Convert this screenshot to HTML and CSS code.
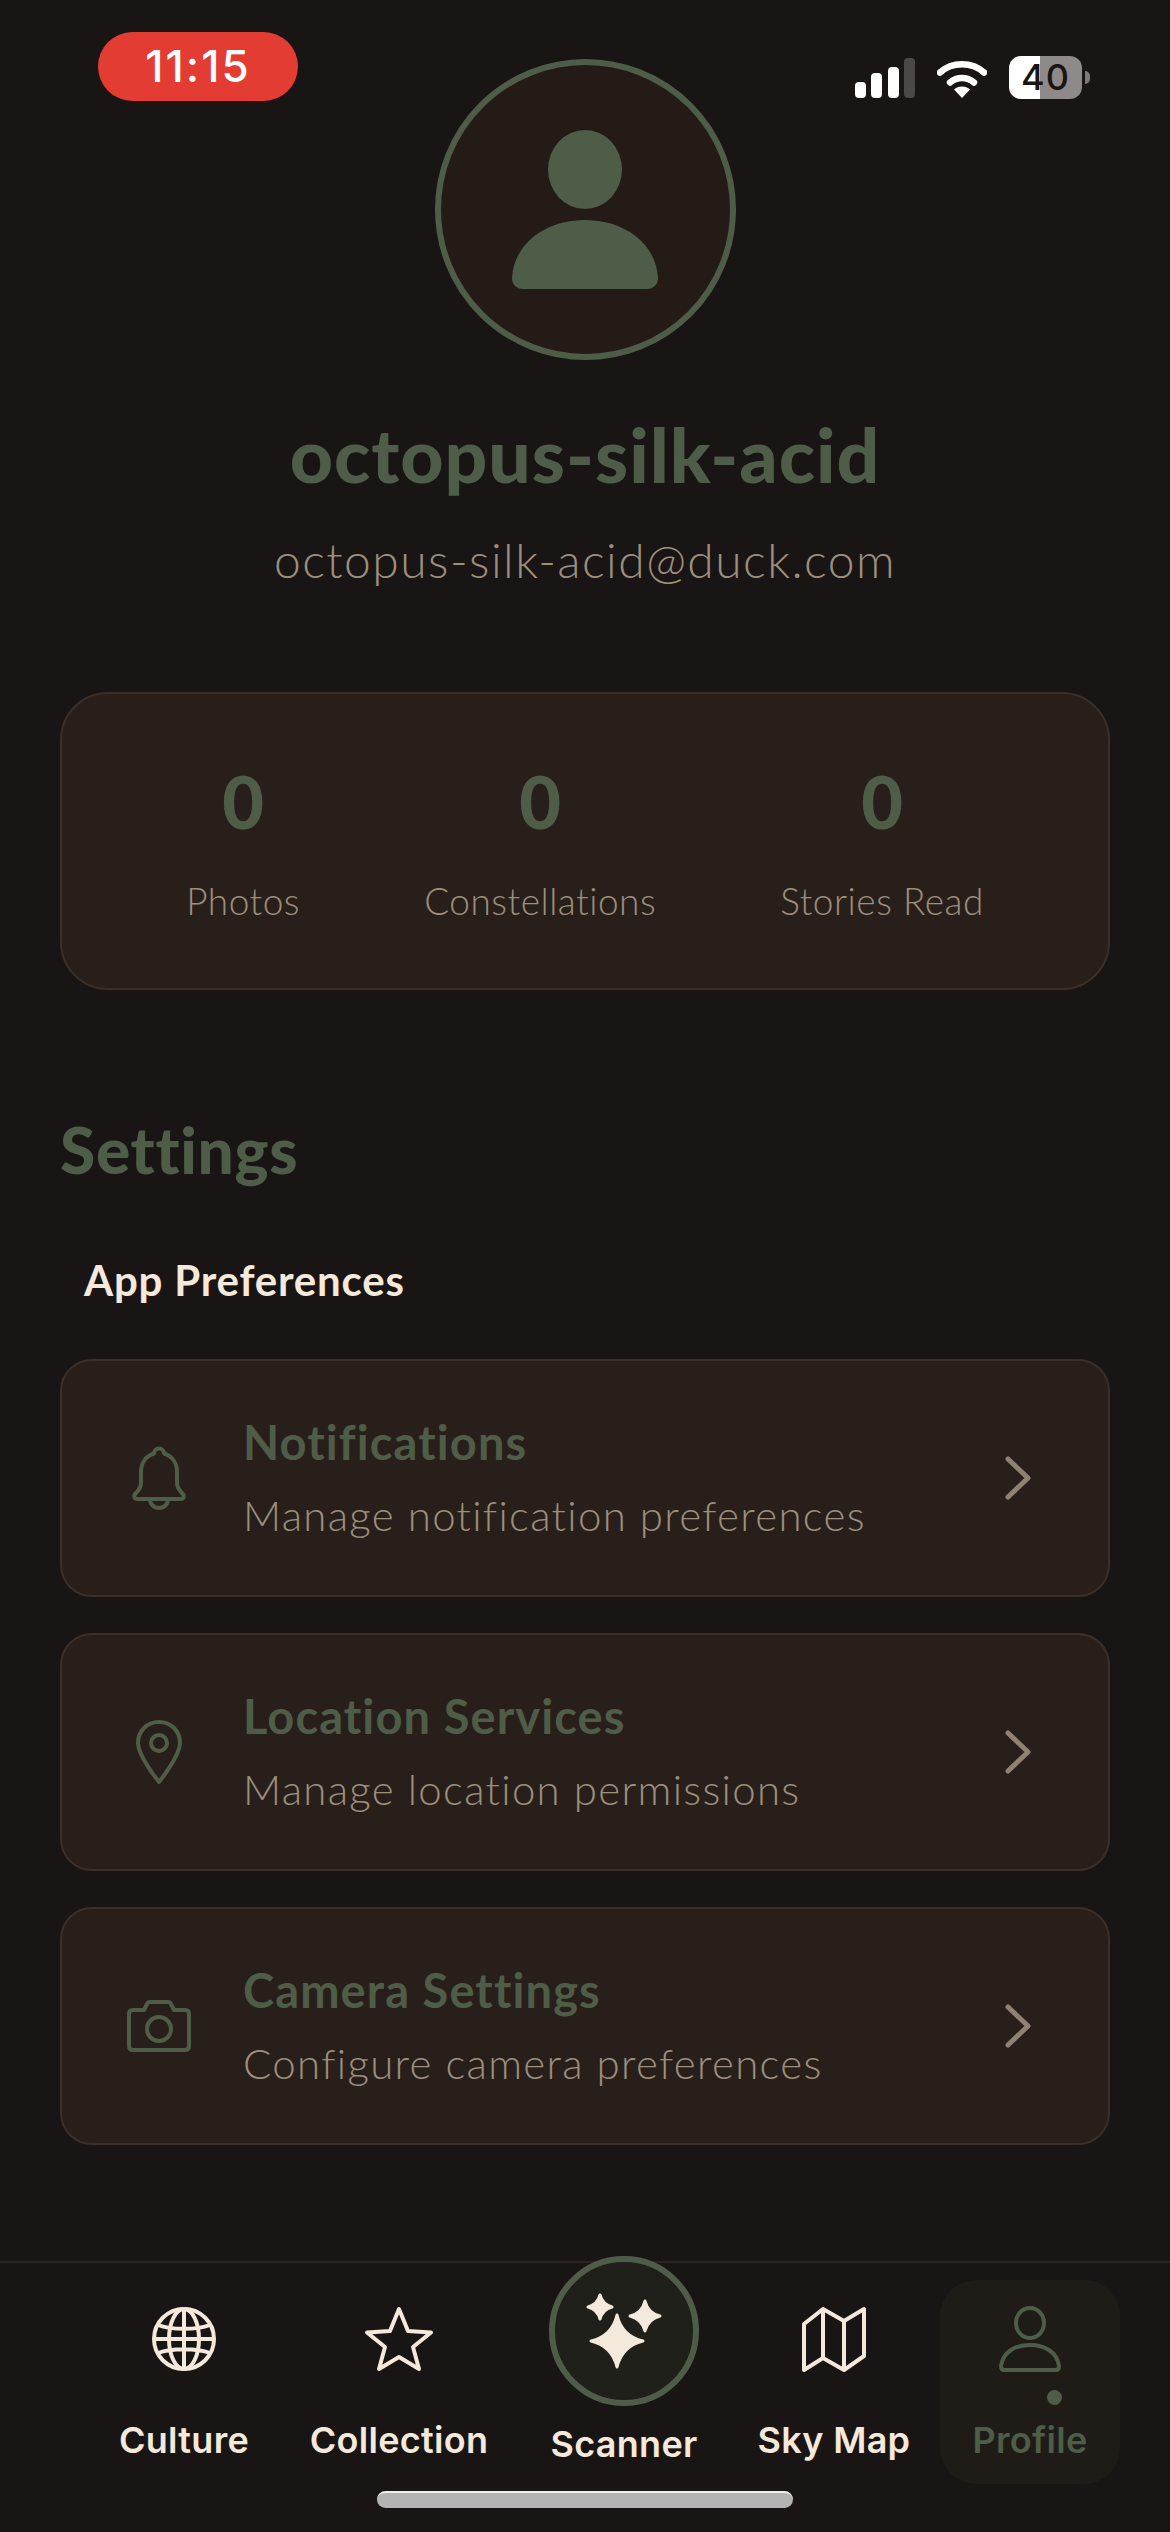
FILE: index.html
```html
<!DOCTYPE html>
<html lang="en">
<head>
  <meta charset="UTF-8">
  <meta name="viewport" content="width=device-width, initial-scale=1.0">
  <title>Profile</title>
  <link rel="stylesheet" href="styles.css">
</head>
<body>
  <div class="status-bar">
    <div class="time-pill">11:15</div>
    <div class="status-icons">
      <svg class="signal" width="60" height="40" viewBox="0 0 60 40">
        <rect x="0" y="24" width="11" height="16" rx="4" fill="#fff"/>
        <rect x="16" y="15" width="11" height="25" rx="4" fill="#fff"/>
        <rect x="33" y="9" width="11" height="31" rx="4" fill="#fff"/>
        <rect x="49" y="0" width="11" height="40" rx="4" fill="#4b4848"/>
      </svg>
      <svg class="wifi" width="50" height="40" viewBox="0 0 50 40">
        <path d="M3 14.500C15 3.500 35 3.500 47 14.500" fill="none" stroke="#fff" stroke-width="6.500" stroke-linecap="round"/>
        <path d="M13 24.500C20 18.500 30 18.500 37 24.500" fill="none" stroke="#fff" stroke-width="6.500" stroke-linecap="round"/>
        <path d="M25 40L17 31.500C21 27.500 29 27.500 33 31.500Z" fill="#fff"/>
      </svg>
      <div class="battery"><span>40</span></div>
    </div>
  </div>

  <main class="content">
    <section class="profile-head">
      <div class="avatar">
        <svg width="148" height="160" viewBox="0 0 148 160">
          <ellipse cx="74" cy="39.500" rx="37" ry="39.500" fill="#4e5d47"/>
          <path d="M1 148C3 113 35 90 74 90C113 90 145 113 147 148C147 154 143 159 136 159H12C5 159 1 154 1 148Z" fill="#4e5d47"/>
        </svg>
      </div>
      <h1 class="user-name">octopus-silk-acid</h1>
      <p class="user-email">octopus-silk-acid@duck.com</p>
    </section>

    <section class="stats-card">
      <div class="stat">
        <div class="stat-value">0</div>
        <div class="stat-label">Photos</div>
      </div>
      <div class="stat">
        <div class="stat-value">0</div>
        <div class="stat-label">Constellations</div>
      </div>
      <div class="stat">
        <div class="stat-value">0</div>
        <div class="stat-label">Stories Read</div>
      </div>
    </section>

    <h2 class="settings-title">Settings</h2>
    <h3 class="group-title">App Preferences</h3>

    <section class="settings-list">
      <div class="setting-row">
        <div class="setting-icon">
          <svg width="56" height="64" viewBox="0 0 56 64" fill="none" stroke="#4e5d47" stroke-width="4" stroke-linecap="round" stroke-linejoin="round">
            <path d="M28 2.500C31 2.500 33 5 33 7.500C41 10 46 17 46 26V37C46 41 48 44 51 47C54 50 53 53 49 53H7C3 53 2 50 5 47C8 44 10 41 10 37V26C10 17 15 10 23 7.500C23 5 25 2.500 28 2.500Z"/>
            <path d="M19 53C19 58.500 23 62 28 62C33 62 37 58.500 37 53"/>
          </svg>
        </div>
        <div class="setting-text">
          <div class="setting-title">Notifications</div>
          <div class="setting-sub">Manage notification preferences</div>
        </div>
        <svg class="chevron" width="28" height="44" viewBox="0 0 28 44" fill="none" stroke="#8f8272" stroke-width="5" stroke-linecap="round" stroke-linejoin="round">
          <path d="M4 3L24 22L4 41"/>
        </svg>
      </div>

      <div class="setting-row">
        <div class="setting-icon">
          <svg width="46" height="64" viewBox="0 0 46 64" fill="none" stroke="#4e5d47" stroke-width="4" stroke-linecap="round" stroke-linejoin="round">
            <path d="M23 62C23 62 44 36 44 23C44 11 35 2 23 2C11 2 2 11 2 23C2 36 23 62 23 62Z"/>
            <circle cx="23" cy="23" r="8"/>
          </svg>
        </div>
        <div class="setting-text">
          <div class="setting-title">Location Services</div>
          <div class="setting-sub">Manage location permissions</div>
        </div>
        <svg class="chevron" width="28" height="44" viewBox="0 0 28 44" fill="none" stroke="#8f8272" stroke-width="5" stroke-linecap="round" stroke-linejoin="round">
          <path d="M4 3L24 22L4 41"/>
        </svg>
      </div>

      <div class="setting-row">
        <div class="setting-icon">
          <svg width="64" height="52" viewBox="0 0 64 52" fill="none" stroke="#4e5d47" stroke-width="4" stroke-linecap="round" stroke-linejoin="round">
            <path d="M6 10H17L20 4C20.500 2.800 21.500 2 23 2H41C42.500 2 43.500 2.800 44 4L47 10H58C60.500 10 62 11.500 62 14V46C62 48.500 60.500 50 58 50H6C3.500 50 2 48.500 2 46V14C2 11.500 3.500 10 6 10Z"/>
            <circle cx="32" cy="29" r="12"/>
          </svg>
        </div>
        <div class="setting-text">
          <div class="setting-title">Camera Settings</div>
          <div class="setting-sub">Configure camera preferences</div>
        </div>
        <svg class="chevron" width="28" height="44" viewBox="0 0 28 44" fill="none" stroke="#8f8272" stroke-width="5" stroke-linecap="round" stroke-linejoin="round">
          <path d="M4 3L24 22L4 41"/>
        </svg>
      </div>
    </section>
  </main>

  <footer class="bottom">
    <nav class="tab-bar">
      <div class="tab tab-culture">
        <svg width="66" height="66" viewBox="0 0 66 66" fill="none" stroke="#f5e9dc" stroke-width="4">
          <circle cx="33" cy="33" r="30"/>
          <ellipse cx="33" cy="33" rx="15" ry="30"/>
          <path d="M33 3V63M3 33H63M7 19C20 24 46 24 59 19M7 47C20 42 46 42 59 47"/>
        </svg>
        <span class="tab-label">Culture</span>
      </div>
      <div class="tab tab-collection">
        <svg width="70" height="66" viewBox="0 0 70 66" fill="none" stroke="#f5e9dc" stroke-width="4" stroke-linejoin="round">
          <path d="M35 3L44 25L67 26.500L49 41L55 63L35 51L15 63L21 41L3 26.500L26 25Z"/>
        </svg>
        <span class="tab-label">Collection</span>
      </div>
      <div class="tab tab-scanner">
        <div class="scanner-circle">
          <svg width="100" height="100" viewBox="-50 -50 100 100" fill="#f5e9dc" stroke="#f5e9dc" stroke-width="3" stroke-linejoin="round">
            <path transform="translate(-7 10)" d="M0-26Q5-5 26 0Q5 5 0 26Q-5 5-26 0Q-5-5 0-26Z"/>
            <path transform="translate(-24 -24)" d="M0-12Q2.500-2.500 12 0Q2.500 2.500 0 12Q-2.500 2.500-12 0Q-2.500-2.500 0-12Z"/>
            <path transform="translate(21 -15)" d="M0-15Q3-3 15 0Q3 3 0 15Q-3 3-15 0Q-3-3 0-15Z"/>
          </svg>
        </div>
        <span class="tab-label">Scanner</span>
      </div>
      <div class="tab tab-map">
        <svg width="66" height="66" viewBox="0 0 66 66" fill="none" stroke="#f5e9dc" stroke-width="4" stroke-linejoin="round">
          <path d="M3 18L22 3L43 15L63 3V50L43 64L22 52L3 64Z"/>
          <path d="M22 3V52M43 15V64"/>
        </svg>
        <span class="tab-label">Sky Map</span>
      </div>
      <div class="tab tab-profile">
        <svg width="62" height="66" viewBox="0 0 62 66" fill="none" stroke="#4e5d47" stroke-width="4" stroke-linejoin="round">
          <ellipse cx="31" cy="17" rx="14" ry="15"/>
          <path d="M2 60C4 46 16 39 31 39C46 39 58 46 60 60C60 63 59 64 57 64H5C3 64 2 63 2 60Z"/>
        </svg>
        <span class="active-dot"></span>
        <span class="tab-label">Profile</span>
      </div>
    </nav>
    <div class="home-indicator"></div>
  </footer>
</body>
</html>
```

FILE: styles.css
```css
body {
  margin: 0;
  width: 1170px;
  height: 2532px;
  overflow: hidden;
  display: flex;
  flex-direction: column;
  position: relative;
  background-color: #191514;
  font-family: Lato, "Open Sans", sans-serif;
}

h1, h2, h3, p {
  margin: 0;
}

/* status bar sits over the top of the page */
.status-bar {
  position: absolute;
  top: 0;
  left: 0;
  right: 0;
  display: flex;
  justify-content: space-between;
  align-items: flex-start;
  padding: 32px 88px 0 98px;
}

.time-pill {
  width: 200px;
  height: 69px;
  border-radius: 35px;
  background-color: #e23c33;
  color: #fff;
  font-family: Inter, "Liberation Sans", sans-serif;
  font-size: 44px;
  font-weight: 500;
  letter-spacing: 2px;
  line-height: 69px;
  text-align: center;
}

.status-icons {
  display: flex;
  align-items: center;
  margin-top: 24px;
}

.signal {
  margin-right: 22px;
}

.wifi {
  margin-right: 22px;
}

.battery {
  position: relative;
  width: 73px;
  height: 43px;
  border-radius: 12px;
  background: linear-gradient(90deg, #fff 43%, #8e8a8a 43%);
  color: #191514;
  font-family: Inter, "Liberation Sans", sans-serif;
  font-size: 36px;
  font-weight: 500;
  letter-spacing: 1px;
  line-height: 43px;
  text-align: center;
}

.battery::after {
  content: "";
  position: absolute;
  left: 76px;
  top: 15px;
  width: 5px;
  height: 13px;
  border-radius: 0 6px 6px 0;
  background-color: #7d7979;
}

.content {
  padding: 59px 60px 0;
}

.profile-head {
  display: flex;
  flex-direction: column;
  align-items: center;
}

.avatar {
  box-sizing: border-box;
  width: 301px;
  height: 301px;
  border: 6px solid #4e5d47;
  border-radius: 50%;
  background-color: #241b17;
  display: flex;
  justify-content: center;
  padding-top: 65px;
}

.user-name {
  margin-top: 54px;
  color: #4e5d47;
  font-size: 75px;
  font-weight: 900;
  letter-spacing: 1px;
  line-height: 80px;
}

.user-email {
  margin-top: 38px;
  color: #9c8f7e;
  font-size: 48px;
  font-weight: 300;
  letter-spacing: 1.45px;
  line-height: 56px;
}

.stats-card {
  margin-top: 104px;
  padding: 65px 0;
  display: flex;
  justify-content: space-evenly;
  background-color: #291f1a;
  border: 2px solid #3b2f27;
  border-radius: 48px;
}

.stat {
  text-align: center;
}

.stat-value {
  color: #4e5d47;
  font-size: 72px;
  font-weight: 900;
  line-height: 84px;
}

.stat-label {
  margin-top: 36px;
  color: #9c8f7e;
  font-size: 37px;
  font-weight: 300;
  letter-spacing: 0.5px;
  line-height: 44px;
}

.settings-title {
  margin-top: 127px;
  color: #4e5d47;
  font-size: 64px;
  font-weight: 900;
  letter-spacing: 0.7px;
  line-height: 66px;
}

.group-title {
  margin-top: 73px;
  padding-left: 24px;
  color: #f5e9dc;
  font-size: 42px;
  font-weight: 700;
  letter-spacing: 0.8px;
  line-height: 48px;
}

.settings-list {
  margin-top: 55px;
  display: flex;
  flex-direction: column;
  gap: 36px;
}

.setting-row {
  height: 238px;
  box-sizing: border-box;
  padding: 0 76px 0 62px;
  display: flex;
  align-items: center;
  background-color: #291f1a;
  border: 2px solid #3b2f27;
  border-radius: 32px;
}

.setting-icon {
  width: 70px;
  display: flex;
  justify-content: center;
}

.setting-text {
  margin: -3px 0 0 49px;
}

.setting-title {
  color: #4e5d47;
  font-size: 47px;
  font-weight: 700;
  letter-spacing: 1.1px;
  line-height: 54px;
}

.setting-sub {
  margin-top: 22px;
  color: #9c8f7e;
  font-size: 42px;
  font-weight: 300;
  letter-spacing: 1.3px;
  line-height: 48px;
}

.chevron {
  margin-left: auto;
}

.bottom {
  margin-top: auto;
  border-top: 2px solid #2c2420;
}

.tab-bar {
  display: flex;
  height: 204px;
  padding: 17px 50px 0 80px;
}

.tab {
  position: relative;
  height: 204px;
  box-sizing: border-box;
  padding-top: 26px;
  display: flex;
  flex-direction: column;
  align-items: center;
}

.tab-culture { width: 208px; }
.tab-collection { width: 222px; }
.tab-scanner { width: 228px; }
.tab-map { width: 192px; margin-right: 10px; }

.tab-profile {
  width: 180px;
  background-color: #1f1c18;
  border-radius: 36px;
}

.tab-label {
  margin-top: 48px;
  color: #f5e9dc;
  font-family: Inter, Roboto, sans-serif;
  font-size: 36px;
  font-weight: 600;
  letter-spacing: 0.3px;
  line-height: 40px;
  white-space: nowrap;
}

.tab-profile .tab-label {
  color: #4e5d47;
}

.active-dot {
  position: absolute;
  left: 107px;
  top: 110px;
  width: 15px;
  height: 15px;
  border-radius: 50%;
  background-color: #4e5d47;
}

.tab-scanner {
  padding-top: 0;
}

.scanner-circle {
  box-sizing: border-box;
  flex: none;
  width: 150px;
  height: 150px;
  margin-top: -24px;
  border: 6px solid #4e5d47;
  border-radius: 50%;
  background-color: #20201b;
  display: flex;
  align-items: center;
  justify-content: center;
}

.tab-scanner .tab-label {
  margin-top: 18px;
}

.home-indicator {
  width: 416px;
  height: 15px;
  margin: 7px auto 24px;
  background-color: #b3b3b3;
  border-top: 2px solid #eee;
  border-radius: 9px;
}
```
